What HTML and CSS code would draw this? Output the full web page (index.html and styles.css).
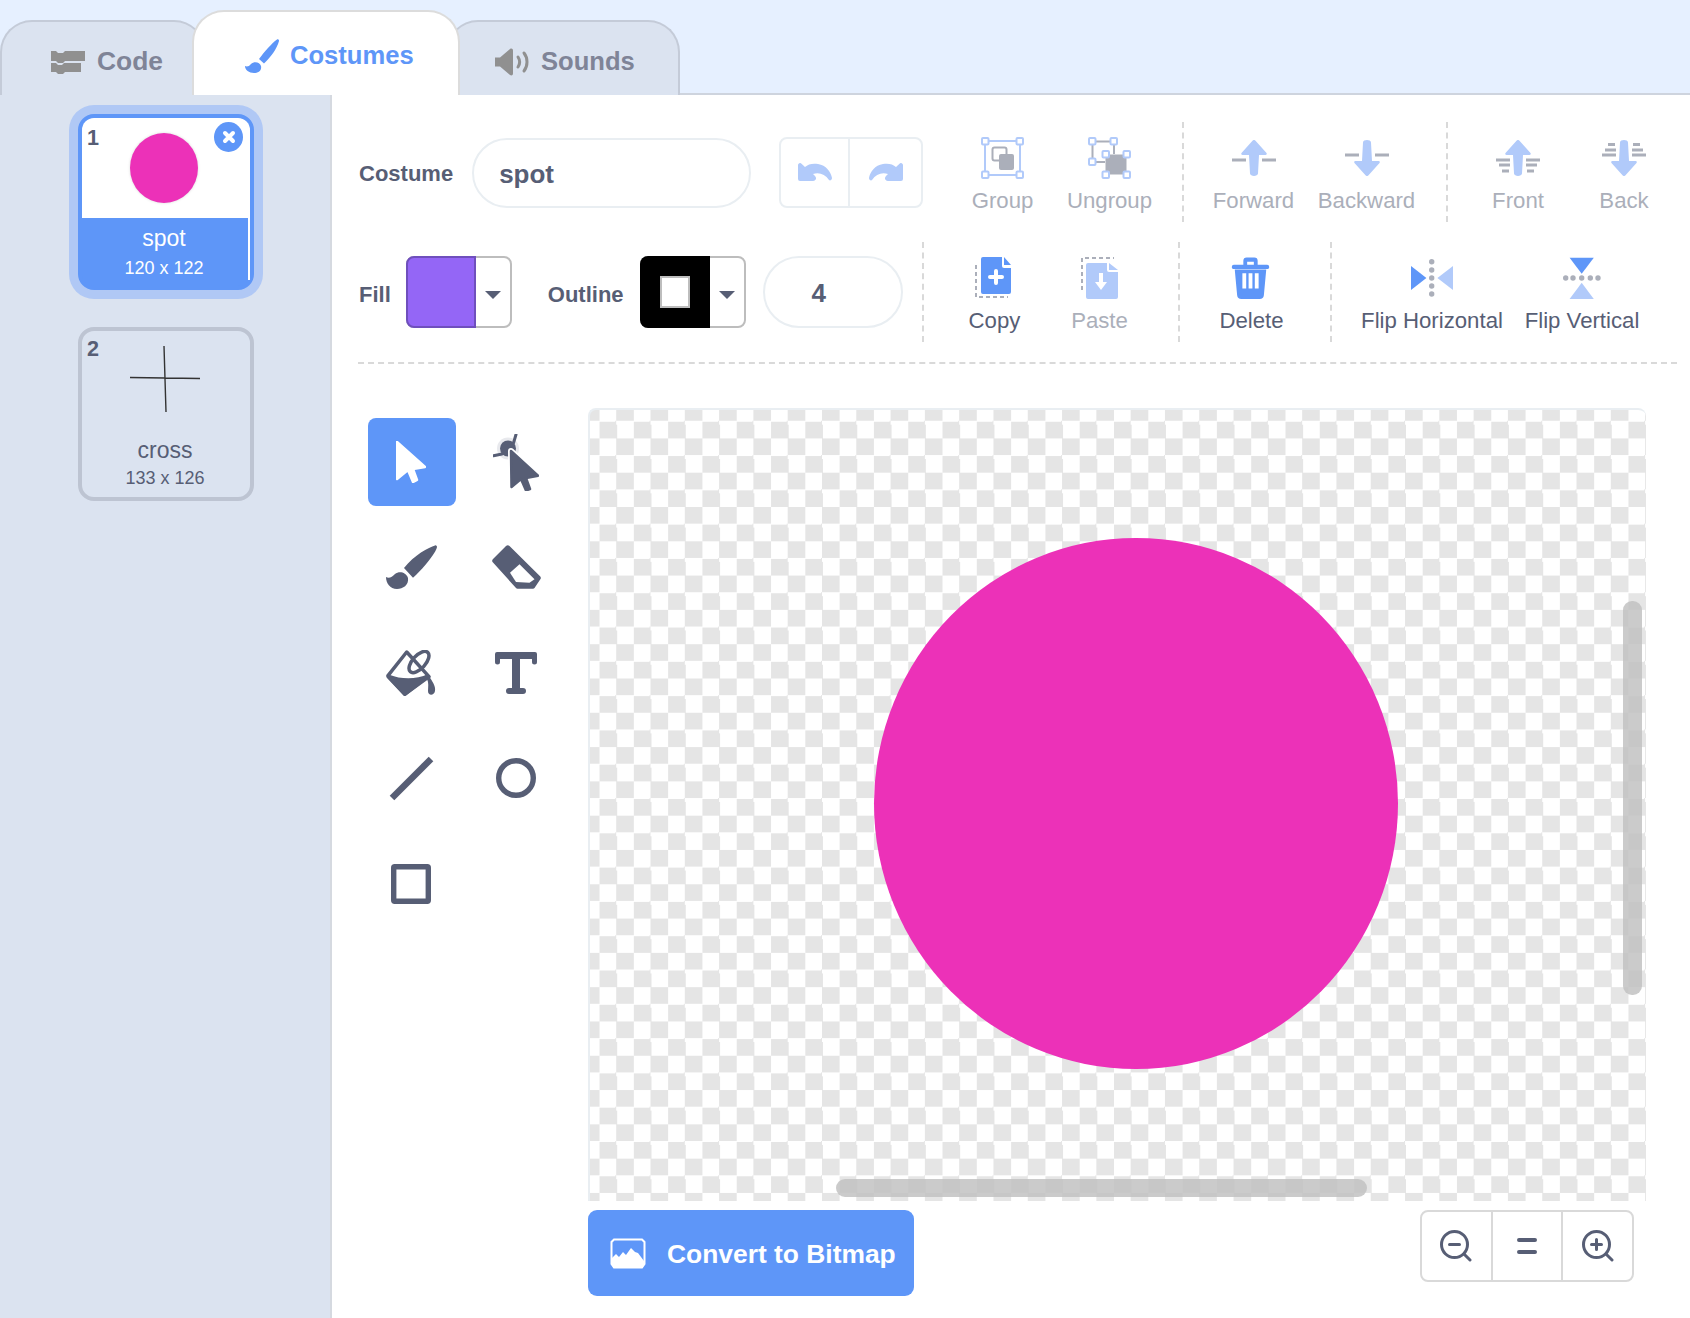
FILE: index.html
```html
<!DOCTYPE html>
<html lang="en">
<head>
    <meta charset="UTF-8">
    <title>Costumes</title>
    <link rel="stylesheet" href="styles.css">
</head>
<body>
<div class="tabs">
    <div class="tab tab-code">
        <svg width="34" height="24" viewBox="0 0 34 24"><path class="tab-icon" d="M0 1h5l2 2h5l2-2h20v10H14l-2 2H7l-2-2H0z"/><path class="tab-icon" d="M0 13h5l2 2h4l2-2h17v9H14l-2 2H7l-2-2H0z"/></svg>
        <span>Code</span>
    </div>
    <div class="tab tab-costumes">
        <svg width="34" height="34" viewBox="0 0 34 34"><path class="blue" d="M32 .4C27 4 19 13 14 20l5 4.500C25 19 32 10 34 2c.2-1-1-2-2-1.600z"/><path class="blue" d="M0 27c2 1 4 .5 6-2 3-3 9-2 10 2 1 5-3 7-7 7-5 0-9-3-9-7z"/></svg>
        <span>Costumes</span>
    </div>
    <div class="tab tab-sounds">
        <svg width="34" height="28" viewBox="0 0 34 28"><path class="tab-icon" d="M0 9.500h5L15 1c1.500-1 3-.3 3 1.500v23c0 1.800-1.500 2.500-3 1.500L5 18.500H0z"/><path class="tab-line" d="M23 9c2 3 2 7 0 10M29 5c4 5 4 13 0 18"/></svg>
        <span>Sounds</span>
    </div>
</div>

<div class="workspace">
    <div class="sidebar">
        <div class="costume costume-selected">
            <span class="costume-index">1</span>
            <span class="costume-delete">
                <svg width="14" height="14" viewBox="0 0 14 14"><path d="M3 3l8 8M11 3l-8 8"/></svg>
            </span>
            <div class="thumb"><div class="thumb-spot"></div></div>
            <div class="costume-info">
                <div class="costume-name">spot</div>
                <div class="costume-size">120 x 122</div>
            </div>
        </div>
        <div class="costume">
            <span class="costume-index">2</span>
            <div class="thumb">
                <svg class="thumb-cross" width="70" height="66" viewBox="0 0 70 66"><path d="M0 31.500L70 32.500M34 0L36 66"/></svg>
            </div>
            <div class="costume-info">
                <div class="costume-name">cross</div>
                <div class="costume-size">133 x 126</div>
            </div>
        </div>
    </div>

    <div class="editor">
        <div class="toolbar">
            <div class="toolbar-row">
                <div class="fields">
                    <span class="field-label">Costume</span>
                    <div class="pill pill-name">spot</div>
                    <div class="undo-group">
                        <span class="undo-btn">
                            <svg width="34" height="18" viewBox="0 0 34 18"><path class="blue-soft" d="M0 2a2 2 0 013.500-1.300L7 4C10 1 15 0 20 1c8 1 13 8 14 14 0 2-2 3-3 2-4-6-10-8-16-6l2 2c2 2 1 5-2 5H2a2 2 0 01-2-2z"/></svg>
                        </span>
                        <span class="undo-btn">
                            <svg width="34" height="18" viewBox="0 0 34 18"><path class="blue-soft" transform="matrix(-1 0 0 1 34 0)" d="M0 2a2 2 0 013.500-1.300L7 4C10 1 15 0 20 1c8 1 13 8 14 14 0 2-2 3-3 2-4-6-10-8-16-6l2 2c2 2 1 5-2 5H2a2 2 0 01-2-2z"/></svg>
                        </span>
                    </div>
                </div>
                <div class="section section-group">
                    <div class="action action-off w107">
                        <svg class="action-icon" width="43" height="42" viewBox="0 0 43 42">
                            <rect class="frame" x="4" y="4" width="35" height="34"/>
                            <rect class="gray-line" x="11.500" y="10.500" width="14" height="13" rx="2"/>
                            <rect class="gray-fill" x="18" y="17" width="15" height="16" rx="2"/>
                            <rect class="handle" x="1" y="1" width="6.500" height="6.500" rx="1"/>
                            <rect class="handle" x="35.500" y="1" width="6.500" height="6.500" rx="1"/>
                            <rect class="handle" x="1" y="34.500" width="6.500" height="6.500" rx="1"/>
                            <rect class="handle" x="35.500" y="34.500" width="6.500" height="6.500" rx="1"/>
                        </svg>
                        <span>Group</span>
                    </div>
                    <div class="action action-off w107">
                        <svg class="action-icon" width="44" height="42" viewBox="0 0 44 42">
                            <path class="gray-line" d="M4.500 4.500H26V17M4.500 4.500V25H17"/>
                            <rect class="gray-fill" x="17.500" y="17.500" width="21" height="20"/>
                            <rect class="handle" x="1" y="1" width="6.500" height="6.500" rx="1"/>
                            <rect class="handle" x="22.500" y="1" width="6.500" height="6.500" rx="1"/>
                            <rect class="handle" x="1" y="21.500" width="6.500" height="6.500" rx="1"/>
                            <rect class="handle" x="14.500" y="14" width="6.500" height="6.500" rx="1"/>
                            <rect class="handle" x="35.500" y="14" width="6.500" height="6.500" rx="1"/>
                            <rect class="handle" x="14.500" y="34.500" width="6.500" height="6.500" rx="1"/>
                            <rect class="handle" x="35.500" y="34.500" width="6.500" height="6.500" rx="1"/>
                        </svg>
                        <span>Ungroup</span>
                    </div>
                </div>
                <div class="section section-order">
                    <div class="action action-off w113">
                        <svg class="action-icon icon-order" width="44" height="36" viewBox="0 0 44 36">
                            <path class="dash" d="M0 20h14M30 20h14"/>
                            <path class="blue-soft" d="M20.500 .8a2 2 0 013 0L34.500 13c.6.8.2 2-1 2H27l-1 18.500c-.2 3.200-7.800 3.200-8 0L17 15h-6.500c-1.200 0-1.600-1.200-1-2z"/>
                        </svg>
                        <span>Forward</span>
                    </div>
                    <div class="action action-off w113">
                        <svg class="action-icon icon-order" width="44" height="36" viewBox="0 0 44 36">
                            <path class="dash" d="M0 15h14M30 15h14"/>
                            <path class="blue-soft" transform="matrix(1 0 0 -1 0 36)" d="M20.500 .8a2 2 0 013 0L34.500 13c.6.8.2 2-1 2H27l-1 18.500c-.2 3.200-7.800 3.200-8 0L17 15h-6.500c-1.200 0-1.600-1.200-1-2z"/>
                        </svg>
                        <span>Backward</span>
                    </div>
                </div>
                <div class="section section-layer">
                    <div class="action action-off w106">
                        <svg class="action-icon icon-order" width="44" height="36" viewBox="0 0 44 36">
                            <path class="dash" d="M0 20h14M30 20h14M3 25h11M30 25h11M6 31h7M31 31h7"/>
                            <path class="blue-soft" d="M20.500 .8a2 2 0 013 0L34.500 13c.6.8.2 2-1 2H27l-1 18.500c-.2 3.200-7.800 3.200-8 0L17 15h-6.500c-1.200 0-1.600-1.200-1-2z"/>
                        </svg>
                        <span>Front</span>
                    </div>
                    <div class="action action-off w106">
                        <svg class="action-icon icon-order" width="44" height="36" viewBox="0 0 44 36">
                            <path class="dash" d="M0 15h14M30 15h14M3 10h11M30 10h11M6 4.500h7M31 4.500h7"/>
                            <path class="blue-soft" transform="matrix(1 0 0 -1 0 36)" d="M20.500 .8a2 2 0 013 0L34.500 13c.6.8.2 2-1 2H27l-1 18.500c-.2 3.200-7.800 3.200-8 0L17 15h-6.500c-1.200 0-1.600-1.200-1-2z"/>
                        </svg>
                        <span>Back</span>
                    </div>
                </div>
            </div>

            <div class="toolbar-row">
                <div class="fields fields-style">
                    <span class="field-label label-fill">Fill</span>
                    <div class="swatch">
                        <span class="swatch-color swatch-purple"></span>
                        <span class="swatch-caret"></span>
                    </div>
                    <span class="field-label label-outline">Outline</span>
                    <div class="swatch">
                        <span class="swatch-color swatch-black"><i class="swatch-hole"></i></span>
                        <span class="swatch-caret"></span>
                    </div>
                    <div class="pill pill-width">4</div>
                </div>
                <div class="section section-clip">
                    <div class="action w105">
                        <svg class="action-icon icon-copy" width="36" height="42" viewBox="0 0 36 42">
                            <path class="dashed-box" d="M1 8v32h32"/>
                            <path class="blue" d="M8 0h19v9a2 2 0 002 2h7v24a2 2 0 01-2 2H8a2 2 0 01-2-2V2a2 2 0 012-2z"/>
                            <path class="blue" d="M29 0l7 8h-7z"/>
                            <path class="plus" d="M21 14v12M15 20h12"/>
                        </svg>
                        <span>Copy</span>
                    </div>
                    <div class="action action-off w105">
                        <svg class="action-icon" width="37" height="42" viewBox="0 0 37 42">
                            <path class="dashed-box" d="M1 33V1h32"/>
                            <path class="blue-soft" d="M7 6h19v7a2 2 0 002 2h9v25a2 2 0 01-2 2H7a2 2 0 01-2-2V8a2 2 0 012-2z"/>
                            <path class="blue-soft" d="M28 6l9 7h-9z"/>
                            <path class="white-fill" d="M18 16h4v9h4l-6 8-6-8h4z"/>
                        </svg>
                        <span>Paste</span>
                    </div>
                </div>
                <div class="section section-delete">
                    <div class="action w105">
                        <svg class="action-icon icon-trash" width="39" height="44" viewBox="0 0 39 44">
                            <path class="blue" d="M12 8V4a3.500 3.500 0 013.500-3.500h8A3.500 3.500 0 0127 4v4h10a2 2 0 012 2v1.500a2 2 0 01-2 1H2a2 2 0 01-2-1V10a2 2 0 012-2zm4 0h7V5h-7z"/>
                            <path class="blue" d="M3 13h33l-2.500 27a4.500 4.500 0 01-4.500 4H10a4.500 4.500 0 01-4.500-4z"/>
                            <path class="white-fill" d="M11 17h4v16h-4zM17.500 17h4v16h-4zM24 17h4v16h-4z"/>
                        </svg>
                        <span>Delete</span>
                    </div>
                </div>
                <div class="section section-flip">
                    <div class="action w150">
                        <svg class="action-icon" width="42" height="38" viewBox="0 0 42 38">
                            <path class="blue" d="M0 7l15.400 12L0 31z"/>
                            <path class="blue-soft" d="M42 7L26.400 19 42 31z"/>
                            <g class="dots"><circle cx="20.700" cy="2.700" r="2.700"/><circle cx="20.700" cy="11" r="2.700"/><circle cx="20.700" cy="19" r="2.700"/><circle cx="20.700" cy="27" r="2.700"/><circle cx="20.700" cy="35" r="2.700"/></g>
                        </svg>
                        <span>Flip Horizontal</span>
                    </div>
                    <div class="action w150">
                        <svg class="action-icon" width="38" height="42" viewBox="0 0 38 42">
                            <path class="blue" d="M6.600 .7h24.200L18.700 16.700z"/>
                            <path class="blue-soft" d="M6.600 42h24.200L18.700 25.700z"/>
                            <g class="dots"><circle cx="2.700" cy="21" r="2.700"/><circle cx="10" cy="21" r="2.700"/><circle cx="18.700" cy="21" r="2.700"/><circle cx="27.300" cy="21" r="2.700"/><circle cx="35" cy="21" r="2.700"/></g>
                        </svg>
                        <span>Flip Vertical</span>
                    </div>
                </div>
            </div>
        </div>

        <div class="paint-area">
            <div class="tool-rail">
                <div class="tool tool-active">
                    <svg width="30" height="42" viewBox="0 0 30 42"><path class="arrow-white" d="M1 1L29 26l-12 2 4 11-4 2-5-12-11 9z"/></svg>
                </div>
                <div class="tool">
                    <svg width="46" height="57" viewBox="0 0 46 57">
                        <circle cx="15" cy="14.500" r="11" fill="#e8e9ed"/>
                        <circle class="ink" cx="15" cy="14.500" r="8"/>
                        <path class="ink-line thin" d="M23 .5L20.500 9M.5 21.700L9 20"/>
                        <path class="arrow-halo" d="M18 17l27 24.700-12 2.300 4 11-4 1.500-5-11.500-9.500 8z"/>
                        <path class="arrow-cut" d="M18 17l27 24.700-12 2.300 4 11-4 1.500-5-11.500-9.500 8z"/>
                    </svg>
                </div>
                <div class="tool">
                    <svg width="51" height="44" viewBox="0 0 51 44"><path class="ink" d="M49 .4C43 2 28 10 18 23l9 9.700C36 25 50 8 51 2c0-1-1-1.900-2-1.600z"/><path class="ink" d="M0 32c3 2 6 0 9-3 4-3 11-2 13 4 1 7-5 11-11 11C4 44 0 38 0 32z"/></svg>
                </div>
                <div class="tool">
                    <svg width="49" height="44" viewBox="0 0 49 44"><path class="ink" d="M14 1L1 14a2.500 2.500 0 000 3.500L24 43a2 2 0 001.500.7H41a2 2 0 001.500-.7l6-9a2 2 0 00-.2-2.400L17.500 1a2.500 2.500 0 00-3.500 0z"/><path class="white-fill" d="M27.500 19.300l15 15-5 3.400-13.500-.7-6-9.300z"/></svg>
                </div>
                <div class="tool">
                    <svg width="50" height="46" viewBox="0 0 50 46">
                        <path class="white-fill ink-line bucket-edge" d="M20.700 2L2 25.700l17 18.500L43 26.700z"/>
                        <path class="ink" d="M4 25c10 4 26 5 38-1l2 2.700-24 18.800a2 2 0 01-2.500 0L1 28a2 2 0 010-2.500z"/>
                        <ellipse class="ink-line no-fill bucket-edge" cx="33" cy="12" rx="13" ry="6.500" transform="rotate(-48 33 12)"/>
                        <path class="ink" d="M43 26c3 5 7 10 6 15-1 5-7 5-7 0 0-4 1-8-1-12z"/>
                    </svg>
                </div>
                <div class="tool">
                    <svg width="42" height="42" viewBox="0 0 42 42"><path class="ink" d="M2 0h38a2 2 0 012 2v8a2.500 2.500 0 01-5 0V7H25v29h3a3 3 0 010 6H14a3 3 0 010-6h3V7H5v3a2.500 2.500 0 01-5 0V2a2 2 0 012-2z"/></svg>
                </div>
                <div class="tool">
                    <svg width="45" height="45" viewBox="0 0 45 45"><path class="ink-line line-tool" d="M3 42L42 3"/></svg>
                </div>
                <div class="tool">
                    <svg width="40" height="40" viewBox="0 0 40 40"><circle class="ink-line no-fill" cx="20" cy="20" r="17.300"/></svg>
                </div>
                <div class="tool">
                    <svg width="40" height="40" viewBox="0 0 40 40"><rect class="ink-line no-fill" x="2.700" y="2.700" width="34.600" height="34.600" rx="1"/></svg>
                </div>
            </div>

            <div class="canvas-column">
                <div class="canvas">
                    <div class="canvas-spot"></div>
                    <div class="scroll scroll-v"></div>
                    <div class="scroll scroll-h"></div>
                </div>
                <div class="canvas-footer">
                    <div class="convert-btn">
                        <svg width="36" height="31" viewBox="0 0 36 31">
                            <path class="frame-white" d="M4 1.500h28l2.500 2.500v22l-2.500 3.500H4L1.500 26V4z"/>
                            <path class="white-fill" d="M2 27v-7l4-4 3 3 4-5 3 3 5-7 4 4 3 1 6 8v4l-3 3H5z"/>
                        </svg>
                        <span>Convert to Bitmap</span>
                    </div>
                    <div class="zoom-group">
                        <span class="zoom-btn">
                            <svg width="32" height="32" viewBox="0 0 32 32"><circle class="zoom-line" cx="14.500" cy="14.500" r="13"/><path class="zoom-line" d="M24 24l6 6M9.500 14.500h10"/></svg>
                        </span>
                        <span class="zoom-btn">
                            <svg width="20" height="16" viewBox="0 0 20 16"><path class="zoom-bar" d="M2 2h16M2 14h16"/></svg>
                        </span>
                        <span class="zoom-btn">
                            <svg width="32" height="32" viewBox="0 0 32 32"><circle class="zoom-line" cx="14.500" cy="14.500" r="13"/><path class="zoom-line" d="M24 24l6 6M9.500 14.500h10M14.500 9.500v10"/></svg>
                        </span>
                    </div>
                </div>
            </div>
        </div>
    </div>
</div>
</body>
</html>
```

FILE: styles.css
```css
* {
    box-sizing: border-box;
}
body {
    margin: 0;
    width: 1690px;
    height: 1318px;
    overflow: hidden;
    background-color: #fff;
    color: #575e75;
    font-family: "Liberation Sans", Arial, sans-serif;
}

/* tabs */
.tabs {
    display: flex;
    align-items: flex-end;
    height: 95px;
    background-color: #e6f0ff;
    border-bottom: 2px solid #ced4de;
}
.tab {
    display: flex;
    align-items: center;
    height: 75px;
    margin-bottom: -2px;
    padding-top: 6px;
    background-color: #dbe3f0;
    border: 2px solid #c4cbd8;
    border-bottom: none;
    border-radius: 32px 32px 0 0;
    font-size: 25.6px;
    font-weight: bold;
    color: #7f8497;
}
.tab-code {
    width: 206px;
    padding-left: 49px;
    gap: 12px;
    font-size: 26.4px;
}
.tab-costumes {
    position: relative;
    z-index: 1;
    width: 268px;
    height: 85px;
    margin-left: -14px;
    padding-left: 51px;
    padding-top: 4px;
    gap: 11px;
    background-color: #fff;
    border-color: #dcdcdc;
    color: #5e96f8;
}
.tab-sounds {
    width: 234px;
    margin-left: -14px;
    padding-left: 47px;
    gap: 12px;
}
.tab-icon {
    fill: #909090;
}
.tab-line {
    fill: none;
    stroke: #909090;
    stroke-width: 3;
    stroke-linecap: round;
}

/* shared icon colours */
.blue {
    fill: #5e96f8;
}
.blue-soft {
    fill: #b1cafa;
}
.white-fill {
    fill: #fff;
}
.ink {
    fill: #575e75;
}
.ink-line {
    stroke: #575e75;
    stroke-width: 5.4;
}
.ink-line.thin {
    stroke-width: 3;
    stroke-linecap: round;
}
.ink-line.line-tool {
    stroke-width: 6.5;
}
.ink-line.bucket-edge {
    stroke-width: 3.5;
    stroke-linejoin: round;
}
.no-fill {
    fill: none;
}

.workspace {
    display: flex;
    height: 1223px;
}

/* costume list */
.sidebar {
    display: flex;
    flex-direction: column;
    align-items: center;
    flex: none;
    width: 332px;
    padding: 19px 0 0 2px;
    background-color: #dbe3f0;
    border-right: 2px solid #d5d9e0;
}
.costume {
    position: relative;
    width: 176px;
    height: 174px;
    margin-top: 37px;
    border: 4px solid #bdc4d2;
    border-radius: 16px;
    text-align: center;
}
.costume-selected {
    height: 176px;
    margin-top: 0;
    padding-bottom: 6px;
    background-color: #5e96f8;
    border-color: #5e96f8;
    box-shadow: 0 0 0 9px #b0c8f5;
    color: #fff;
}
.costume-index {
    position: absolute;
    top: 6px;
    left: 5px;
    font-size: 21.6px;
    font-weight: bold;
    line-height: 24px;
    color: #575e75;
}
.costume-selected .costume-index {
    top: 8px;
}
.costume-delete {
    position: absolute;
    top: 4px;
    left: 132px;
    display: flex;
    align-items: center;
    justify-content: center;
    width: 29px;
    height: 30px;
    border-radius: 50%;
    background-color: #5e96f8;
}
.costume-delete path {
    stroke: #fff;
    stroke-width: 4;
    stroke-linecap: round;
}
.thumb {
    display: flex;
    align-items: center;
    justify-content: center;
    height: 100px;
    padding-right: 2px;
}
.costume-selected .thumb {
    padding-right: 4px;
    background-color: #fff;
    border-radius: 12px 12px 0 0;
}
.thumb-spot {
    width: 68px;
    height: 70px;
    border-radius: 50%;
    background-color: #ec31b8;
    box-shadow: 0 0 3px rgba(0, 0, 0, 0.15);
}
.thumb-cross {
    margin-bottom: 4px;
}
.thumb-cross path {
    fill: none;
    stroke: #333;
    stroke-width: 1.4;
}
.costume-info {
    height: 62px;
    padding-top: 5px;
}
.costume-selected .costume-info {
    padding-top: 6px;
    border-right: 2px solid #fff;
}
.costume-name {
    font-size: 23px;
    line-height: 28px;
    padding-right: 2px;
}
.costume-size {
    font-size: 18px;
    line-height: 22px;
    margin-top: 3px;
    padding-right: 2px;
}
.costume-selected .costume-size {
    margin-top: 5px;
}

/* top toolbar */
.editor {
    flex: 1;
    padding: 0 14px 0 26px;
}
.toolbar {
    display: flex;
    flex-direction: column;
    gap: 20px;
    padding: 27px 0 20px;
    border-bottom: 2px dashed #d9d9d9;
}
.toolbar-row {
    display: flex;
    height: 100px;
}
.fields {
    display: flex;
    align-items: center;
    flex: none;
    width: 565px;
    padding-left: 1px;
}
.fields-style {
    width: 564px;
}
.field-label {
    padding-top: 4px;
    font-size: 22px;
    font-weight: bold;
    margin-right: 19px;
}
.fields-style .field-label {
    padding-top: 6px;
}
.fields-style .label-fill {
    margin-right: 15px;
}
.fields-style .label-outline {
    margin-left: 36px;
    margin-right: 16px;
}
.pill {
    display: flex;
    align-items: center;
    padding-top: 2px;
    border: 2px solid #e9eef2;
    border-radius: 36px;
    font-size: 26px;
    font-weight: bold;
}
.pill-name {
    width: 280px;
    height: 70px;
    margin-top: 2px;
    padding-left: 25px;
}
.pill-width {
    width: 140px;
    height: 72px;
    margin-left: 17px;
    padding-left: 47px;
}
.undo-group {
    display: flex;
    width: 144px;
    height: 71px;
    margin-left: 28px;
    border: 2px solid #e9eef2;
    border-radius: 8px;
}
.undo-btn {
    display: flex;
    flex: 1;
    align-items: center;
    justify-content: center;
}
.undo-btn + .undo-btn {
    flex: 0 0 73px;
    border-left: 2px solid #e9eef2;
}
.swatch {
    display: flex;
    width: 106px;
    height: 72px;
    border: 2px solid #bdbdbd;
    border-radius: 8px;
}
.swatch-color {
    display: flex;
    align-items: center;
    justify-content: center;
    width: 70px;
    height: 72px;
    margin: -2px 0 -2px -2px;
    border-radius: 8px 0 0 8px;
}
.swatch-purple {
    background-color: #9466f6;
    border: 2px solid #6f4fbd;
}
.swatch-black {
    background-color: #000;
}
.swatch-hole {
    width: 30px;
    height: 32px;
    background-color: #fff;
    border: 2px solid #bdbdbd;
}
.swatch-caret {
    width: 0;
    height: 0;
    margin: 33px 0 0 9px;
    border-style: solid;
    border-width: 8px 8px 0;
    border-color: #575e75 transparent transparent;
}
.section {
    display: flex;
    border-left: 2px dashed #d9d9d9;
}
.section-group {
    border-left: none;
    width: 259px;
    padding-left: 26px;
}
.section-order {
    width: 264px;
    padding-left: 13px;
}
.section-layer {
    padding-left: 17px;
}
.section-clip {
    width: 256px;
    padding-left: 18px;
}
.section-delete {
    width: 152px;
    padding-left: 19px;
}
.section-flip {
    padding-left: 25px;
}
.action {
    display: flex;
    flex-direction: column;
    align-items: center;
    padding-top: 15px;
    font-size: 22.2px;
    line-height: 24px;
}
.action-icon {
    display: block;
    flex: none;
    height: 42px;
    margin-bottom: 10px;
}
.icon-order {
    height: 36px;
    margin-top: 3px;
    margin-bottom: 13px;
}
.icon-copy {
    margin-right: 4px;
}
.icon-trash {
    margin-right: 2px;
}
.action-off {
    color: #abafba;
}
.w105 {
    width: 105px;
}
.w106 {
    width: 106px;
}
.w107 {
    width: 107px;
}
.w113 {
    width: 113px;
}
.w150 {
    width: 150px;
}
.frame {
    fill: none;
    stroke: #b1cafa;
    stroke-width: 2;
}
.handle {
    fill: #fff;
    stroke: #b1cafa;
    stroke-width: 2;
}
.gray-fill {
    fill: #abafba;
}
.gray-line {
    fill: none;
    stroke: #abafba;
    stroke-width: 2;
}
.dash {
    fill: none;
    stroke: #abafba;
    stroke-width: 3;
}
.dashed-box {
    fill: none;
    stroke: #abafba;
    stroke-width: 2;
    stroke-dasharray: 4 3;
}
.plus {
    fill: none;
    stroke: #fff;
    stroke-width: 4;
    stroke-linecap: round;
}
.dots circle {
    fill: #abafba;
}

/* tools and canvas */
.paint-area {
    display: flex;
    gap: 26px;
    padding: 44px 0 0 10px;
}
.tool-rail {
    display: grid;
    flex: none;
    grid-template-columns: 88px 88px;
    grid-auto-rows: 88px;
    gap: 17.4px 17px;
    width: 194px;
    padding-top: 10px;
}
.tool {
    display: flex;
    align-items: center;
    justify-content: center;
}
.tool svg {
    margin-right: 2px;
}
.tool-active {
    background-color: #5e96f8;
    border-radius: 8px;
}
.arrow-white {
    fill: #fff;
    stroke: #fff;
    stroke-width: 2.5;
    stroke-linejoin: round;
}
.arrow-halo {
    fill: #fff;
    stroke: #fff;
    stroke-width: 6;
    stroke-linejoin: round;
}
.arrow-cut {
    fill: #575e75;
    stroke: #575e75;
    stroke-width: 2.5;
    stroke-linejoin: round;
}
.canvas-column {
    width: 1058px;
}
.canvas {
    position: relative;
    height: 793px;
    overflow: hidden;
    border-top: 2px solid #e9eef2;
    border-left: 2px solid #e9eef2;
    border-radius: 8px 8px 0 0;
    background-color: #fff;
    background-image: conic-gradient(#e5e5e5 25%, #fff 0 50%, #e5e5e5 0 75%, #fff 0);
    background-size: 34.3px 34.3px;
    background-position: 9.55px -5.9px;
}
.canvas-spot {
    position: absolute;
    top: 128px;
    left: 284px;
    width: 524px;
    height: 531px;
    border-radius: 50%;
    background-color: #ec31b8;
}
.scroll {
    position: absolute;
    border-radius: 9px;
    background-color: rgba(194, 194, 194, 0.85);
}
.scroll-v {
    top: 191px;
    left: 1033px;
    width: 19px;
    height: 394px;
}
.scroll-h {
    top: 769px;
    left: 246px;
    width: 531px;
    height: 18px;
}
.canvas-footer {
    display: flex;
    justify-content: space-between;
    align-items: flex-start;
    padding: 9px 12px 0 0;
}
.convert-btn {
    display: flex;
    align-items: center;
    gap: 21px;
    width: 326px;
    height: 86px;
    padding-left: 22px;
    border-radius: 9px;
    background-color: #5e96f8;
    color: #fff;
    font-size: 26.4px;
    font-weight: bold;
}
.convert-btn span {
    padding-top: 3px;
}
.frame-white {
    fill: none;
    stroke: #fff;
    stroke-width: 2;
}
.zoom-group {
    display: flex;
    width: 214px;
    height: 72px;
    border: 2px solid #d9d9d9;
    border-radius: 8px;
}
.zoom-btn {
    display: flex;
    flex: 1;
    align-items: center;
    justify-content: center;
}
.zoom-btn + .zoom-btn {
    border-left: 2px solid #d9d9d9;
}
.zoom-line {
    fill: none;
    stroke: #575e75;
    stroke-width: 3;
    stroke-linecap: round;
}
.zoom-bar {
    fill: none;
    stroke: #575e75;
    stroke-width: 4;
    stroke-linecap: round;
}
```
